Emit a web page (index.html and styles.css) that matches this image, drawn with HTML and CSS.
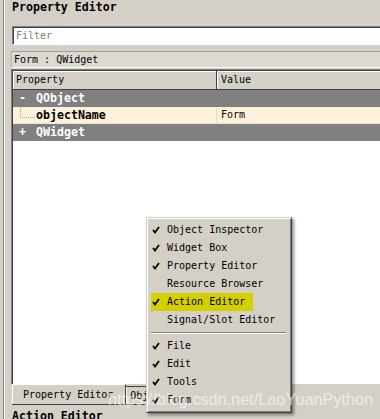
FILE: index.html
```html
<!DOCTYPE html>
<html lang="en">
<head>
    <meta charset="UTF-8">
    <title>Property Editor</title>
    <link rel="stylesheet" href="styles.css">
</head>
<body>
    <div class="window">
        <div class="edge"></div>
        <div class="dock">
            <div class="dock-title">Property Editor</div>
            <div class="filter">Filter</div>
            <div class="obj-label">Form : QWidget</div>
            <div class="tree">
                <div class="tree-head">
                    <div class="col-prop">Property</div>
                    <div class="col-val">Value</div>
                </div>
                <div class="row group">
                    <div class="col-prop"><span class="toggle">-</span>QObject</div>
                    <div class="col-val"></div>
                </div>
                <div class="row prop">
                    <div class="col-prop"><span class="branch"></span>objectName</div>
                    <div class="col-val">Form</div>
                </div>
                <div class="row group">
                    <div class="col-prop"><span class="toggle">+</span>QWidget</div>
                    <div class="col-val"></div>
                </div>
                <div class="tree-empty"></div>
            </div>
            <div class="tabs">
                <div class="tab selected">Property Editor</div>
                <div class="tab">Object Inspector</div>
            </div>
            <div class="dock-title next">Action Editor</div>
        </div>
    </div>

    <div class="menu">
        <div class="item"><span class="check"><svg viewBox="0 0 8 8"><polyline points="1,4 3,6.5 7,1"/></svg></span>Object Inspector</div>
        <div class="item"><span class="check"><svg viewBox="0 0 8 8"><polyline points="1,4 3,6.5 7,1"/></svg></span>Widget Box</div>
        <div class="item"><span class="check"><svg viewBox="0 0 8 8"><polyline points="1,4 3,6.5 7,1"/></svg></span>Property Editor</div>
        <div class="item"><span class="check"></span>Resource Browser</div>
        <div class="item marked"><span class="check"><svg viewBox="0 0 8 8"><polyline points="1,4 3,6.5 7,1"/></svg></span>Action Editor</div>
        <div class="item"><span class="check"></span>Signal/Slot Editor</div>
        <div class="sep"></div>
        <div class="item"><span class="check"><svg viewBox="0 0 8 8"><polyline points="1,4 3,6.5 7,1"/></svg></span>File</div>
        <div class="item"><span class="check"><svg viewBox="0 0 8 8"><polyline points="1,4 3,6.5 7,1"/></svg></span>Edit</div>
        <div class="item"><span class="check"><svg viewBox="0 0 8 8"><polyline points="1,4 3,6.5 7,1"/></svg></span>Tools</div>
        <div class="item"><span class="check"><svg viewBox="0 0 8 8"><polyline points="1,4 3,6.5 7,1"/></svg></span>Form</div>
    </div>

    <div class="watermark">https://blog.csdn.net/LaoYuanPython</div>
</body>
</html>
```

FILE: styles.css
```css
body {
    margin: 0;
    width: 380px;
    height: 419px;
    overflow: hidden;
    background: #d4d0c8;
    font-family: "DejaVu Sans Mono", "Liberation Mono", monospace;
    font-size: 10px;
    color: #000;
    position: relative;
}
.window {
    display: flex;
    height: 419px;
}
.edge {
    width: 3px;
    border-right: 1px solid #808080;
    box-shadow: 1px 0 0 #fff;
    flex: none;
}
.dock {
    flex: 1;
    padding-left: 7px;
    display: flex;
    flex-direction: column;
    min-width: 0;
}
.dock-title {
    height: 14px;
    line-height: 14px;
    padding-left: 1px;
    font-weight: bold;
    font-size: 11.6px;
    white-space: nowrap;
}
.dock-title.next {
    margin-top: 5px;
}
.filter {
    margin-top: 12px;
    margin-left: 1px;
    height: 17px;
    line-height: 17px;
    background: #fff;
    border-top: 1px solid #808080;
    border-left: 1px solid #808080;
    border-bottom: 1px solid #fff;
    box-shadow: inset 1px 1px 0 #404040;
    padding-left: 3px;
    color: #808080;
}
.obj-label {
    margin-top: 6px;
    height: 15px;
    line-height: 15px;
    background: #dcd9d3;
    border-top: 1px solid #a09d96;
    border-left: 1px solid #b8b4ac;
    border-bottom: 1px solid #fff;
    padding-left: 2px;
}
.tree {
    margin-top: 1px;
    flex: none;
    height: 314px;
    display: flex;
    flex-direction: column;
    border-top: 1px solid #808080;
    border-left: 1px solid #808080;
    box-shadow: inset 1px 1px 0 #404040;
    background: #fff;
}
.tree-head {
    display: flex;
    height: 18px;
    line-height: 18px;
    margin: 1px 0 0 1px;
    background: #d4d0c8;
    border-bottom: 1px solid #404040;
    box-shadow: inset 1px 1px 0 #fff;
}
.col-prop {
    box-sizing: border-box;
    width: 204px;
    flex: none;
    white-space: nowrap;
}
.tree-head .col-prop {
    padding-left: 3px;
    border-right: 1px solid #404040;
}
.tree-head .col-val {
    flex: 1;
    padding-left: 4px;
    box-shadow: inset 1px 1px 0 #fff;
}
.row {
    display: flex;
    height: 17px;
    line-height: 17px;
    margin-left: 1px;
    font-weight: bold;
    font-size: 11.6px;
}
.row .col-prop {
    padding-left: 23px;
    position: relative;
}
.row .col-val {
    flex: 1;
    padding-left: 4px;
    font-weight: normal;
    font-size: 10px;
}
.row.group {
    background: #808080;
    color: #fff;
}
.row.prop {
    height: 16px;
    line-height: 16px;
    background: #fff0dc;
    border-bottom: 1px solid #e8e4dc;
}
.row.prop .col-prop {
    border-right: 1px solid #e0ddd6;
}
.toggle {
    position: absolute;
    left: 6px;
    top: 0;
}
.branch {
    position: absolute;
    left: 7px;
    top: 0;
    width: 14px;
    height: 10px;
    border-left: 1px dotted #a0a0a0;
    border-bottom: 1px dotted #a0a0a0;
}
.tree-empty {
    flex: 1;
}
.tabs {
    display: flex;
    height: 20px;
    align-items: flex-start;
    margin-left: 1px;
    white-space: nowrap;
}
.tab {
    height: 17px;
    line-height: 17px;
    padding: 0 12px 0 11px;
    border-right: 1px solid #404040;
    border-bottom: 1px solid #404040;
    box-shadow: inset 1px 0 0 #fff;
}
.tab.selected {
    height: 19px;
    line-height: 20px;
    border-top: 1px solid #fff;
}
.tab:not(.selected) {
    margin-top: 2px;
    border-top: 1px solid #404040;
    padding-left: 4px;
}
.menu {
    position: absolute;
    left: 146px;
    top: 217px;
    width: 142px;
    padding: 3px 1px;
    background: #d4d0c8;
    border-top: 1px solid #d4d0c8;
    border-left: 1px solid #d4d0c8;
    border-right: 1px solid #404040;
    border-bottom: 1px solid #404040;
    box-shadow: inset 1px 1px 0 #fff, inset -1px -1px 0 #808080, 2px 2px 3px rgba(0, 0, 0, 0.45);
}
.item {
    display: flex;
    align-items: center;
    height: 18px;
    line-height: 18px;
    padding-left: 4px;
    white-space: nowrap;
}
.item.marked {
    background: linear-gradient(#d4d000, #d4d000) no-repeat 3px 0 / 102px 18px;
}
.check {
    width: 15px;
    height: 18px;
    display: flex;
    align-items: center;
}
.check svg {
    width: 8px;
    height: 8px;
    fill: none;
    stroke: #000;
    stroke-width: 1.8;
}
.sep {
    height: 8px;
    margin: 0 4px 0 3px;
    background: linear-gradient(#d4d0c8 3px, #808080 3px, #808080 4px, #fff 4px, #fff 5px, #d4d0c8 5px);
}
.watermark {
    position: absolute;
    left: 108px;
    top: 390px;
    font-family: "Liberation Sans", Arial, sans-serif;
    font-size: 16.3px;
    color: rgba(255, 255, 255, 0.6);
    white-space: nowrap;
}
```
